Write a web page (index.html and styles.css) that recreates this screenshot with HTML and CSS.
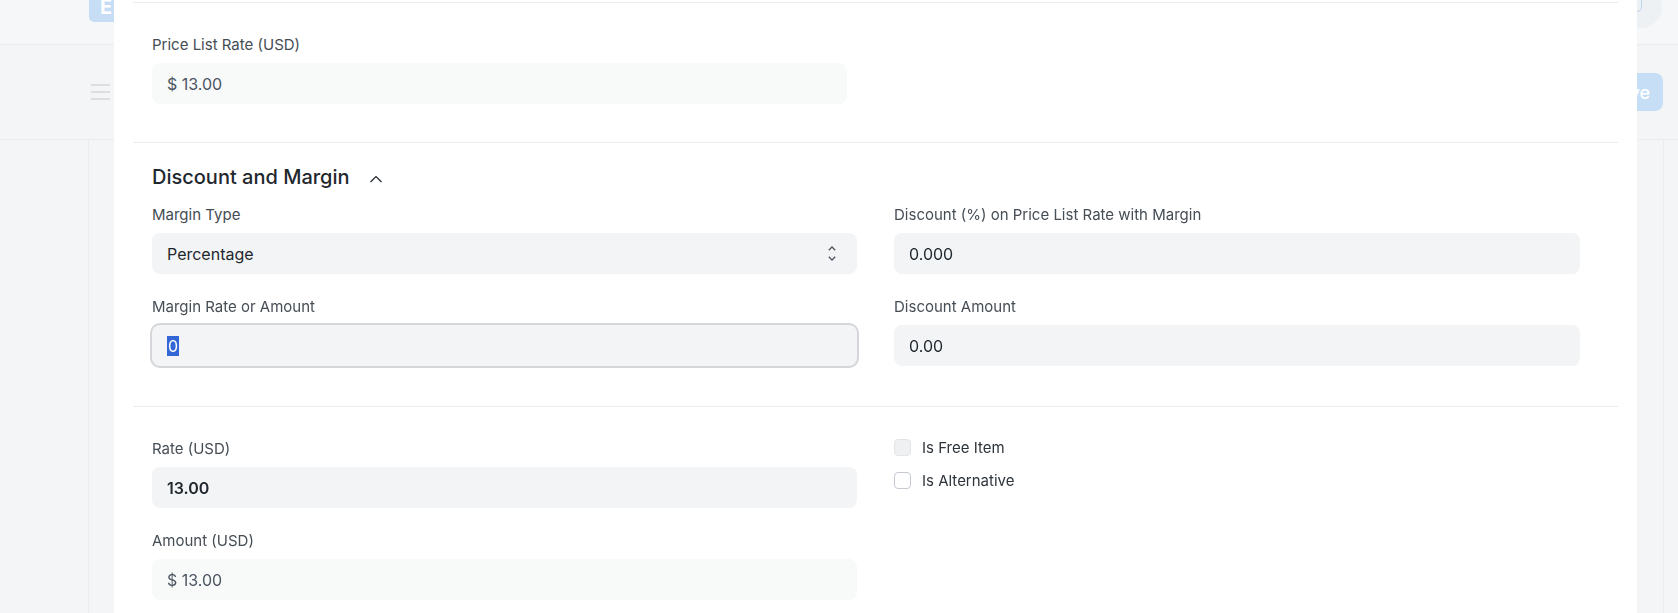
FILE: index.html
```html
<!DOCTYPE html>
<html lang="en">
<head>
    <meta charset="UTF-8">
    <meta name="viewport" content="width=device-width, initial-scale=1.0">
    <title>Item Details</title>
    <link rel="stylesheet" href="styles.css">
</head>
<body>

    <!-- Page behind the dialog -->
    <div class="page">
        <div class="navbar">
            <div class="logo">E</div>
            <div class="avatar"><span class="notif"></span></div>
        </div>
        <div class="page-head">
            <div class="menu-icon"><span></span><span></span><span></span></div>
            <button class="btn-save">Save</button>
        </div>
        <div class="page-body"></div>
    </div>

    <!-- Dialog -->
    <div class="modal">

        <div class="section">
            <div class="grid single">
                <div class="field">
                    <label>Price List Rate (USD)</label>
                    <div class="control readonly">$ 13.00</div>
                </div>
            </div>
        </div>

        <div class="section section-collapsible">
            <div class="section-head">
                <span>Discount and Margin</span>
                <svg class="chevron" width="14" height="8" viewBox="0 0 14 8"><path d="M1.5 7 L7 1.5 L12.5 7" fill="none" stroke="#1f272e" stroke-width="1.2"/></svg>
            </div>
            <div class="grid">
                <div class="column">
                    <div class="field">
                        <label>Margin Type</label>
                        <div class="control select">
                            Percentage
                            <svg class="select-arrows" width="10" height="17" viewBox="0 0 10 17"><path d="M1.8 5.2 L5 2 L8.2 5.2 M1.8 11.8 L5 15 L8.2 11.8" fill="none" stroke="#4c5561" stroke-width="1.3"/></svg>
                        </div>
                    </div>
                    <div class="field">
                        <label>Margin Rate or Amount</label>
                        <div class="control focused"><span class="selected">0</span></div>
                    </div>
                </div>
                <div class="column">
                    <div class="field">
                        <label>Discount (%) on Price List Rate with Margin</label>
                        <div class="control">0.000</div>
                    </div>
                    <div class="field">
                        <label>Discount Amount</label>
                        <div class="control">0.00</div>
                    </div>
                </div>
            </div>
        </div>

        <div class="section">
            <div class="grid">
                <div class="column">
                    <div class="field">
                        <label>Rate (USD)</label>
                        <div class="control bold">13.00</div>
                    </div>
                    <div class="field">
                        <label>Amount (USD)</label>
                        <div class="control readonly">$ 13.00</div>
                    </div>
                </div>
                <div class="column checks">
                    <div class="check"><span class="box disabled"></span>Is Free Item</div>
                    <div class="check"><span class="box"></span>Is Alternative</div>
                </div>
            </div>
        </div>

    </div>

</body>
</html>
```

FILE: styles.css
```css
/* Common Styles */
* {
    margin: 0;
    padding: 0;
    box-sizing: border-box;
    font-family: Inter, "Noto Sans", sans-serif;
}

body {
    width: 1678px;
    height: 613px;
    overflow: hidden;
    background-color: #f4f5f6;
}

/* Faded page behind the dialog */
.navbar {
    height: 45px;
    display: flex;
    justify-content: space-between;
    padding: 0 16px 0 89px;
    border-bottom: 1px solid #ebeced;
    background-color: #f6f7f8;
}

.logo {
    width: 32px;
    height: 28px;
    margin-top: -6px;
    border-radius: 5px;
    background-color: #c6ddf5;
    color: #fff;
    font-size: 20px;
    line-height: 20px;
    font-weight: 700;
    padding: 3px 0 0 11px;
}

.avatar {
    width: 42px;
    height: 42px;
    margin-top: -14px;
    border-radius: 50%;
    background-color: #eef1f4;
    padding: 6px 0 0 2px;
}

.notif {
    display: block;
    width: 20px;
    height: 20px;
    border: 1.5px solid #bcd6f2;
    border-radius: 5px;
}

.page-head {
    height: 95px;
    display: flex;
    justify-content: space-between;
    align-items: center;
    padding: 0 15px 0 91px;
    border-bottom: 1px solid #ebeced;
}

.menu-icon {
    display: flex;
    flex-direction: column;
    gap: 5.5px;
    width: 19px;
}

.menu-icon span {
    height: 1.5px;
    background-color: #dcdee1;
}

.btn-save {
    height: 38px;
    padding: 0 13px 0 16px;
    border: none;
    border-radius: 8px;
    background-color: #c7dff6;
    color: #fff;
    font-size: 18px;
    font-weight: 500;
}

.page-body {
    margin-left: 88px;
    width: 1576px;
    height: 480px;
    border-left: 1px solid #ebeced;
    border-right: 1px solid #ebeced;
}

/* Dialog */
.modal {
    position: fixed;
    top: 0;
    left: 114px;
    width: 1523px;
    height: 613px;
    padding: 2px 19px 0;
    background-color: #fff;
}

.section {
    border-top: 1px solid #ededee;
    padding: 32px 19px 15px;
}

.section-collapsible {
    padding-top: 22px;
    padding-bottom: 17px;
}

.section-head {
    display: flex;
    align-items: center;
    gap: 19px;
    height: 24px;
    margin-bottom: 16px;
    font-size: 20px;
    font-weight: 500;
    color: #1f272e;
}

.chevron {
    margin-top: 3px;
}

.grid {
    display: grid;
    grid-template-columns: 705px 686px;
    column-gap: 37px;
}

.grid.single {
    grid-template-columns: 695px;
}

.field {
    margin-bottom: 23px;
}

label {
    display: block;
    height: 20px;
    line-height: 20px;
    margin-bottom: 8px;
    font-size: 15px;
    color: #454d55;
}

.control {
    height: 41px;
    display: flex;
    align-items: center;
    justify-content: space-between;
    padding: 0 20px 0 15px;
    border-radius: 8px;
    background-color: #f3f4f5;
    font-size: 16px;
    color: #1f272e;
}

.control.readonly {
    background-color: #f8f9f9;
    color: #4c5561;
}

.control.bold {
    font-weight: 600;
}

.control.focused {
    justify-content: flex-start;
    box-shadow: 0 0 0 2px #d4d6d9;
}

.selected {
    background-color: #3367d6;
    color: #fff;
    line-height: 20px;
    padding: 0 1px;
}

.checks {
    display: flex;
    flex-direction: column;
    gap: 16px;
}

.check {
    display: flex;
    align-items: center;
    gap: 11px;
    height: 17px;
    font-size: 15px;
    color: #2d343b;
}

.box {
    width: 17px;
    height: 17px;
    border: 1px solid #c4cad0;
    border-radius: 4px;
    background-color: #fff;
}

.box.disabled {
    border-color: #e2e5e8;
    background-color: #eef0f1;
}
```
